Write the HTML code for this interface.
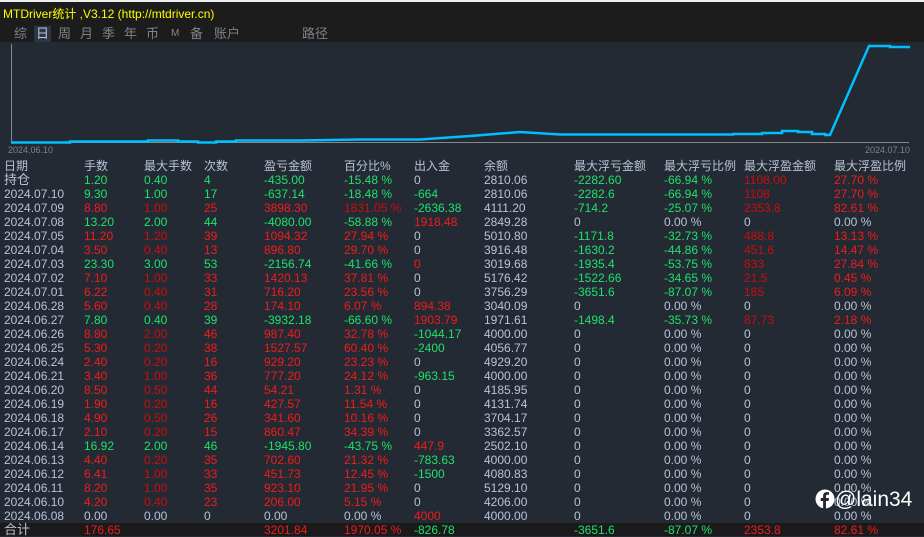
<!DOCTYPE html>
<html><head><meta charset="utf-8"><style>
body{margin:0;width:924px;height:536px;background:#232a33;overflow:hidden;font-family:"Liberation Sans","Noto Sans CJK SC",sans-serif;position:relative}
#top{position:absolute;left:0;top:0;width:924px;height:42px;background:#1c1c1c;border-top:2px solid #eee;box-sizing:border-box}
#title{position:absolute;left:3px;top:3px;color:#ffff00;font-size:12px}
.tab{position:absolute;top:24px;color:#7c838c;font-size:13px;line-height:16px}
.sel{background:#2c3541;color:#b8c8e0;padding:0 2px;margin-left:-2px}
.rows{position:absolute;left:0;top:0}
.r{position:absolute;left:4px;height:14px;font-size:12px;line-height:14px;white-space:nowrap;color:#b9c3d6}
.r span{display:inline-block;overflow:visible}
.r span:nth-child(1){width:80px}.r span:nth-child(2){width:60px}.r span:nth-child(3){width:60px}.r span:nth-child(4){width:60px}.r span:nth-child(5){width:80px}.r span:nth-child(6){width:70px}.r span:nth-child(7){width:70px}.r span:nth-child(8){width:90px}.r span:nth-child(9){width:90px}.r span:nth-child(10){width:80px}.r span:nth-child(11){width:90px}
.g{color:#1ee26c}.rd{color:#f01c1c}.d{color:#c80e0e}
.h{font-size:12px;color:#b9c3d6}
#tot{position:absolute;left:0;top:523px;width:924px;height:13px;background:#1a1a1a}
#wm{position:absolute;left:815px;top:487px;color:#fff;font-size:21px;line-height:26px}
</style></head><body>
<div id="top">
<div id="title">MTDriver统计 ,V3.12 (http://mtdriver.cn)</div>
<span class="tab" style="left:14px">综</span>
<span class="tab sel" style="left:36px">日</span>
<span class="tab" style="left:58px">周</span>
<span class="tab" style="left:80px">月</span>
<span class="tab" style="left:102px">季</span>
<span class="tab" style="left:124px">年</span>
<span class="tab" style="left:146px">币</span>
<span class="tab" style="left:171px;font-size:10px;color:#9a7b8c">M</span>
<span class="tab" style="left:190px">备</span>
<span class="tab" style="left:214px">账户</span>
<span class="tab" style="left:302px">路径</span>
</div>
<svg style="position:absolute;left:0;top:0" width="924" height="160">
<line x1="11.5" y1="44" x2="11.5" y2="143" stroke="#888" stroke-width="1"/>
<line x1="11" y1="142.5" x2="909" y2="142.5" stroke="#888" stroke-width="1"/>
<polyline fill="none" stroke="#00bfff" stroke-width="2.5" points="11,142.5 70,142.5 70,141.5 148,141.5 148,140.5 178,140.5 178,141.5 198,141.5 198,142.5 216,142.5 216,141.5 236,141.5 236,140.5 300,140.5 360,139.5 420,139.5 470,136 520,132 560,134.5 640,134.5 700,134.5 733,134.5 733,134 762,134 762,133 782,133 782,131 798,131 798,132 812,132 812,134 825,134 825,135 830,135 869,46 890,46 890,47 910,47"/>
<text x="8" y="153" font-size="9" fill="#7c8592" font-family="Liberation Sans">2024.06.10</text>
<text x="865" y="153" font-size="9" fill="#7c8592" font-family="Liberation Sans">2024.07.10</text>
</svg>
<div id="tot"></div>
<div class="rows">
<div class="r h" style="top:159px"><span>日期</span><span>手数</span><span>最大手数</span><span>次数</span><span>盈亏金额</span><span>百分比%</span><span>出入金</span><span>余额</span><span>最大浮亏金额</span><span>最大浮亏比例</span><span>最大浮盈金额</span><span>最大浮盈比例</span></div>
<div class="r" style="top:173px"><span style="font-size:13px">持仓</span><span class="g">1.20</span><span class="g">0.40</span><span class="g">4</span><span class="g">-435.00</span><span class="g">-15.48 %</span><span>0</span><span>2810.06</span><span class="g">-2282.60</span><span class="g">-66.94 %</span><span class="d">1108.00</span><span class="rd">27.70 %</span></div>
<div class="r" style="top:187px"><span>2024.07.10</span><span class="g">9.30</span><span class="g">1.00</span><span class="g">17</span><span class="g">-637.14</span><span class="g">-18.48 %</span><span class="g">-664</span><span>2810.06</span><span class="g">-2282.6</span><span class="g">-66.94 %</span><span class="d">1108</span><span class="rd">27.70 %</span></div>
<div class="r" style="top:201px"><span>2024.07.09</span><span class="rd">8.80</span><span class="d">1.00</span><span class="rd">25</span><span class="rd">3898.30</span><span class="d">1831.05 %</span><span class="g">-2636.38</span><span>4111.20</span><span class="g">-714.2</span><span class="g">-25.07 %</span><span class="d">2353.8</span><span class="rd">82.61 %</span></div>
<div class="r" style="top:215px"><span>2024.07.08</span><span class="g">13.20</span><span class="g">2.00</span><span class="g">44</span><span class="g">-4080.00</span><span class="g">-58.88 %</span><span class="rd">1918.48</span><span>2849.28</span><span>0</span><span>0.00 %</span><span>0</span><span>0.00 %</span></div>
<div class="r" style="top:229px"><span>2024.07.05</span><span class="rd">11.20</span><span class="d">1.20</span><span class="rd">39</span><span class="rd">1094.32</span><span class="rd">27.94 %</span><span>0</span><span>5010.80</span><span class="g">-1171.8</span><span class="g">-32.73 %</span><span class="d">488.8</span><span class="rd">13.13 %</span></div>
<div class="r" style="top:243px"><span>2024.07.04</span><span class="rd">3.50</span><span class="d">0.40</span><span class="rd">13</span><span class="rd">896.80</span><span class="rd">29.70 %</span><span>0</span><span>3916.48</span><span class="g">-1630.2</span><span class="g">-44.86 %</span><span class="d">451.6</span><span class="rd">14.47 %</span></div>
<div class="r" style="top:257px"><span>2024.07.03</span><span class="g">23.30</span><span class="g">3.00</span><span class="g">53</span><span class="g">-2156.74</span><span class="g">-41.66 %</span><span class="rd">0</span><span>3019.68</span><span class="g">-1935.4</span><span class="g">-53.75 %</span><span class="d">833</span><span class="rd">27.84 %</span></div>
<div class="r" style="top:271px"><span>2024.07.02</span><span class="rd">7.10</span><span class="d">1.00</span><span class="rd">33</span><span class="rd">1420.13</span><span class="rd">37.81 %</span><span>0</span><span>5176.42</span><span class="g">-1522.66</span><span class="g">-34.65 %</span><span class="d">21.5</span><span class="rd">0.45 %</span></div>
<div class="r" style="top:285px"><span>2024.07.01</span><span class="rd">6.22</span><span class="d">0.40</span><span class="rd">31</span><span class="rd">716.20</span><span class="rd">23.56 %</span><span>0</span><span>3756.29</span><span class="g">-3651.6</span><span class="g">-87.07 %</span><span class="d">185</span><span class="rd">6.09 %</span></div>
<div class="r" style="top:299px"><span>2024.06.28</span><span class="rd">5.60</span><span class="d">0.40</span><span class="rd">28</span><span class="rd">174.10</span><span class="rd">6.07 %</span><span class="rd">894.38</span><span>3040.09</span><span>0</span><span>0.00 %</span><span>0</span><span>0.00 %</span></div>
<div class="r" style="top:313px"><span>2024.06.27</span><span class="g">7.80</span><span class="g">0.40</span><span class="g">39</span><span class="g">-3932.18</span><span class="g">-66.60 %</span><span class="rd">1903.79</span><span>1971.61</span><span class="g">-1498.4</span><span class="g">-35.73 %</span><span class="d">87.73</span><span class="rd">2.18 %</span></div>
<div class="r" style="top:327px"><span>2024.06.26</span><span class="rd">8.80</span><span class="d">2.00</span><span class="rd">46</span><span class="rd">987.40</span><span class="rd">32.78 %</span><span class="g">-1044.17</span><span>4000.00</span><span>0</span><span>0.00 %</span><span>0</span><span>0.00 %</span></div>
<div class="r" style="top:341px"><span>2024.06.25</span><span class="rd">5.30</span><span class="d">0.20</span><span class="rd">38</span><span class="rd">1527.57</span><span class="rd">60.40 %</span><span class="g">-2400</span><span>4056.77</span><span>0</span><span>0.00 %</span><span>0</span><span>0.00 %</span></div>
<div class="r" style="top:355px"><span>2024.06.24</span><span class="rd">2.40</span><span class="d">0.20</span><span class="rd">16</span><span class="rd">929.20</span><span class="rd">23.23 %</span><span>0</span><span>4929.20</span><span>0</span><span>0.00 %</span><span>0</span><span>0.00 %</span></div>
<div class="r" style="top:369px"><span>2024.06.21</span><span class="rd">3.40</span><span class="d">1.00</span><span class="rd">36</span><span class="rd">777.20</span><span class="rd">24.12 %</span><span class="g">-963.15</span><span>4000.00</span><span>0</span><span>0.00 %</span><span>0</span><span>0.00 %</span></div>
<div class="r" style="top:383px"><span>2024.06.20</span><span class="rd">8.50</span><span class="d">0.50</span><span class="rd">44</span><span class="rd">54.21</span><span class="rd">1.31 %</span><span>0</span><span>4185.95</span><span>0</span><span>0.00 %</span><span>0</span><span>0.00 %</span></div>
<div class="r" style="top:397px"><span>2024.06.19</span><span class="rd">1.90</span><span class="d">0.20</span><span class="rd">16</span><span class="rd">427.57</span><span class="rd">11.54 %</span><span>0</span><span>4131.74</span><span>0</span><span>0.00 %</span><span>0</span><span>0.00 %</span></div>
<div class="r" style="top:411px"><span>2024.06.18</span><span class="rd">4.90</span><span class="d">0.50</span><span class="rd">26</span><span class="rd">341.60</span><span class="rd">10.16 %</span><span>0</span><span>3704.17</span><span>0</span><span>0.00 %</span><span>0</span><span>0.00 %</span></div>
<div class="r" style="top:425px"><span>2024.06.17</span><span class="rd">2.10</span><span class="d">0.20</span><span class="rd">15</span><span class="rd">860.47</span><span class="rd">34.39 %</span><span>0</span><span>3362.57</span><span>0</span><span>0.00 %</span><span>0</span><span>0.00 %</span></div>
<div class="r" style="top:439px"><span>2024.06.14</span><span class="g">16.92</span><span class="g">2.00</span><span class="g">46</span><span class="g">-1945.80</span><span class="g">-43.75 %</span><span class="rd">447.9</span><span>2502.10</span><span>0</span><span>0.00 %</span><span>0</span><span>0.00 %</span></div>
<div class="r" style="top:453px"><span>2024.06.13</span><span class="rd">4.40</span><span class="d">0.20</span><span class="rd">35</span><span class="rd">702.60</span><span class="rd">21.32 %</span><span class="g">-783.63</span><span>4000.00</span><span>0</span><span>0.00 %</span><span>0</span><span>0.00 %</span></div>
<div class="r" style="top:467px"><span>2024.06.12</span><span class="rd">6.41</span><span class="d">1.00</span><span class="rd">33</span><span class="rd">451.73</span><span class="rd">12.45 %</span><span class="g">-1500</span><span>4080.83</span><span>0</span><span>0.00 %</span><span>0</span><span>0.00 %</span></div>
<div class="r" style="top:481px"><span>2024.06.11</span><span class="rd">8.20</span><span class="d">1.00</span><span class="rd">35</span><span class="rd">923.10</span><span class="rd">21.95 %</span><span>0</span><span>5129.10</span><span>0</span><span>0.00 %</span><span>0</span><span>0.00 %</span></div>
<div class="r" style="top:495px"><span>2024.06.10</span><span class="rd">4.20</span><span class="d">0.40</span><span class="rd">23</span><span class="rd">206.00</span><span class="rd">5.15 %</span><span>0</span><span>4206.00</span><span>0</span><span>0.00 %</span><span>0</span><span>0.00 %</span></div>
<div class="r" style="top:509px"><span>2024.06.08</span><span>0.00</span><span>0.00</span><span>0</span><span>0.00</span><span>0.00 %</span><span class="rd">4000</span><span>4000.00</span><span>0</span><span>0.00 %</span><span>0</span><span>0.00 %</span></div>
<div class="r" style="top:523px"><span style="font-size:13px">合计</span><span class="rd">176.65</span><span></span><span></span><span class="rd">3201.84</span><span class="rd">1970.05 %</span><span class="g">-826.78</span><span></span><span class="g">-3651.6</span><span class="g">-87.07 %</span><span class="rd">2353.8</span><span class="rd">82.61 %</span></div>
</div>
<div id="wm"><svg width="20" height="20" viewBox="0 0 20 20" style="vertical-align:-3px"><circle cx="10" cy="10" r="9.5" fill="#fff"/><path d="M11 20V12h2.6l.4-3H11V7.3c0-.9.3-1.5 1.6-1.5H14V3.2c-.3 0-1.2-.1-2.2-.1-2.2 0-3.7 1.3-3.7 3.8V9H5.7v3h2.4v8z" fill="#232a33"/></svg>@lain34</div>
</body></html>
